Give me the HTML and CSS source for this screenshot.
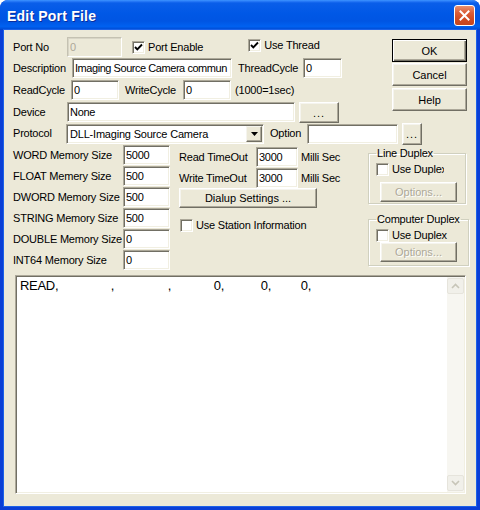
FILE: index.html
```html
<!DOCTYPE html>
<html lang="en">
<head>
    <meta charset="UTF-8">
    <title>Edit Port File</title>
    <link rel="stylesheet" href="styles.css">
</head>
<body>
    <div class="window">
        <div class="titlebar">
            <span class="title">Edit Port File</span>
            <button class="close" type="button">
                <svg width="11" height="11" viewBox="0 0 11 11"><path d="M1.5 1.5 L9.5 9.5 M9.5 1.5 L1.5 9.5" stroke="#fff" stroke-width="2" stroke-linecap="square"/></svg>
            </button>
        </div>

        <div class="client">
            <div class="top">
                <div class="row">
                    <span class="lbl w-port">Port No</span>
                    <input class="edit disabled w55" type="text" value="0" disabled>
                    <label class="check gap11"><span class="chk on"><svg width="9" height="9" viewBox="0 0 9 9"><path d="M1 4 L3.3 6.3 L8 1.5" stroke="#000" stroke-width="1.9" fill="none"/></svg></span>Port Enable</label>
                    <label class="check gap-thread"><span class="chk on"><svg width="9" height="9" viewBox="0 0 9 9"><path d="M1 4 L3.3 6.3 L8 1.5" stroke="#000" stroke-width="1.9" fill="none"/></svg></span>Use Thread</label>
                </div>
                <div class="cmd">
                    <button class="btn default" type="button">OK</button>
                    <button class="btn" type="button">Cancel</button>
                    <button class="btn help" type="button">Help</button>
                </div>
                <div class="row">
                    <span class="lbl w-desc">Description</span>
                    <input class="edit w160" type="text" value="Imaging Source Camera commun">
                    <span class="lbl w-thread">ThreadCycle</span>
                    <input class="edit w39" type="text" value="0">
                </div>
                <div class="row">
                    <span class="lbl w-cycle">ReadCycle</span>
                    <input class="edit w48" type="text" value="0">
                    <span class="lbl w-cycle gap6">WriteCycle</span>
                    <input class="edit w48" type="text" value="0">
                    <span class="lbl gap4">(1000=1sec)</span>
                </div>
                <div class="row">
                    <span class="lbl w-port">Device</span>
                    <input class="edit w228" type="text" value="None">
                    <button class="btn dots w40" type="button">...</button>
                </div>
                <div class="row span">
                    <span class="lbl w-proto">Protocol</span>
                    <div class="combo">
                        <span class="combo-text">DLL-Imaging Source Camera</span>
                        <span class="combo-btn"><svg width="7" height="4" viewBox="0 0 7 4"><path d="M0 0 H7 L3.5 4 Z" fill="#000"/></svg></span>
                    </div>
                    <span class="lbl w-option">Option</span>
                    <input class="edit w91" type="text" value="">
                    <button class="btn dots w20" type="button">...</button>
                </div>
            </div>

            <div class="mid">
                <div class="mem">
                    <div class="mem-row"><span class="lbl w-mem">WORD Memory Size</span><input class="edit w47" type="text" value="5000"></div>
                    <div class="mem-row"><span class="lbl w-mem">FLOAT Memery Size</span><input class="edit w47" type="text" value="500"></div>
                    <div class="mem-row"><span class="lbl w-mem">DWORD Memory Size</span><input class="edit w47" type="text" value="500"></div>
                    <div class="mem-row"><span class="lbl w-mem">STRING Memory Size</span><input class="edit w47" type="text" value="500"></div>
                    <div class="mem-row"><span class="lbl w-mem">DOUBLE Memory Size</span><input class="edit w47" type="text" value="0"></div>
                    <div class="mem-row"><span class="lbl w-mem">INT64 Memory Size</span><input class="edit w47" type="text" value="0"></div>
                </div>

                <div class="timeouts">
                    <div class="mem-row"><span class="lbl w-time">Read TimeOut</span><input class="edit w42" type="text" value="3000"><span class="lbl gap3">Milli Sec</span></div>
                    <div class="mem-row"><span class="lbl w-time">Write TimeOut</span><input class="edit w42" type="text" value="3000"><span class="lbl gap3">Milli Sec</span></div>
                    <button class="btn dialup" type="button">Dialup Settings ...</button>
                    <label class="check station"><span class="chk"></span>Use Station Information</label>
                </div>

                <div class="duplex">
                    <fieldset class="group">
                        <legend>Line Duplex</legend>
                        <label class="check"><span class="chk"></span><span class="clip">Use Duplex</span></label>
                        <button class="btn off options" type="button" disabled>Options...</button>
                    </fieldset>
                    <fieldset class="group second">
                        <legend>Computer Duplex</legend>
                        <label class="check"><span class="chk"></span>Use Duplex</label>
                        <button class="btn off options tight" type="button" disabled>Options...</button>
                    </fieldset>
                </div>
            </div>

            <div class="log">
                <div class="log-text"><span class="cell c1">READ,</span><span class="cell c2">,</span><span class="cell c3">,</span><span class="cell c4">0,</span><span class="cell c5">0,</span><span class="cell c6">0,</span></div>
                <div class="vscroll">
                    <span class="arrow"><svg width="9" height="6" viewBox="0 0 9 6"><path d="M1 5 L4.5 1.5 L8 5" stroke="#c7c5b8" stroke-width="1.6" fill="none"/></svg></span>
                    <span class="track"></span>
                    <span class="arrow"><svg width="9" height="6" viewBox="0 0 9 6"><path d="M1 1 L4.5 4.5 L8 1" stroke="#c7c5b8" stroke-width="1.6" fill="none"/></svg></span>
                </div>
            </div>
        </div>
    </div>
</body>
</html>
```

FILE: styles.css
```css
body {
    margin: 0;
    background-color: #fff;
    font-family: "Liberation Sans", Arial, sans-serif;
    font-size: 11px;
    color: #000;
}
.window {
    width: 480px;
    height: 510px;
    display: flex;
    flex-direction: column;
    background-color: #0b3fd6;
    border-radius: 8px 8px 0 0;
    overflow: hidden;
}
.titlebar {
    height: 30px;
    flex: none;
    display: flex;
    align-items: center;
    justify-content: space-between;
    padding: 0 5px 0 7px;
    background: linear-gradient(to bottom, #3d95ff 0%, #2a7cf8 4%, #0a5ee9 10%, #0058e6 45%, #0055e3 70%, #0061f0 88%, #0052dd 95%, #0040c8 100%);
}
.title {
    color: #fff;
    font-weight: bold;
    font-size: 14px;
    letter-spacing: 0.2px;
    text-shadow: 1px 1px 0 #0a2d9c;
    margin-top: 1px;
}
.close {
    width: 21px;
    height: 21px;
    padding: 0;
    margin-top: 1px;
    border: 1px solid #fff;
    border-radius: 3px;
    background: linear-gradient(to bottom, #e8906f 0%, #dc5e38 35%, #cf4a22 70%, #c5461f 100%);
    display: flex;
    align-items: center;
    justify-content: center;
}
.client {
    flex: 1;
    margin: 0 4px 4px;
    padding: 7px 9px 0;
    background-color: #ece9d8;
    box-shadow: 0 0 0 1px #1c62e8;
}

/* common controls */
.lbl {
    flex: none;
    line-height: 20px;
    white-space: nowrap;
    letter-spacing: -0.2px;
}
.edit {
    box-sizing: border-box;
    height: 20px;
    margin: 0;
    padding: 0 2px;
    font-family: "Liberation Sans", Arial, sans-serif;
    font-size: 11px;
    letter-spacing: -0.3px;
    color: #000;
    background-color: #fff;
    border: 1px solid;
    border-color: #aca899 #fff #fff #aca899;
    box-shadow: inset 1px 1px 0 #716f64, inset -1px -1px 0 #f1efe2;
    outline: none;
}
.edit.disabled {
    background-color: #ece9d8;
    color: #aca899;
    border-color: #c5c2b2 #fff #fff #c5c2b2;
    box-shadow: inset 1px 1px 0 #d8d5c6;
}
.btn {
    box-sizing: border-box;
    height: 23px;
    margin: 0;
    padding: 0;
    font-family: "Liberation Sans", Arial, sans-serif;
    font-size: 11px;
    color: #000;
    background-color: #ece9d8;
    border: 1px solid;
    border-color: #fff #716f64 #716f64 #fff;
    box-shadow: inset -1px -1px 0 #aca899, inset 1px 1px 0 #f5f4ee;
}
.btn.default {
    border: 1px solid #000;
    box-shadow: inset 1px 1px 0 #fff, inset -1px -1px 0 #716f64, inset -2px -2px 0 #aca899;
}
.btn.off {
    color: #aca899;
    text-shadow: 1px 1px 0 #fff;
}
.check {
    display: flex;
    align-items: center;
    white-space: nowrap;
    line-height: 20px;
    letter-spacing: -0.2px;
}
.chk {
    box-sizing: border-box;
    width: 13px;
    height: 13px;
    flex: none;
    margin-right: 3px;
    display: flex;
    align-items: center;
    justify-content: center;
    background-color: #fff;
    border: 1px solid;
    border-color: #aca899 #fff #fff #aca899;
    box-shadow: inset 1px 1px 0 #716f64, inset -1px -1px 0 #f1efe2;
}

/* top block */
.top {
    display: grid;
    grid-template-columns: 379px 75px;
    grid-template-rows: 21px 22px 22px 21px 22px;
}
.row {
    display: flex;
    align-items: flex-start;
}
.row.span {
    grid-column: 1 / 3;
}
.cmd {
    grid-column: 2;
    grid-row: 1 / 5;
    display: flex;
    flex-direction: column;
    padding-top: 2px;
}
.cmd .btn {
    width: 75px;
    margin-bottom: 1px;
}
.cmd .help {
    margin-top: 1px;
}
.w-port { width: 54px; }
.w-desc { width: 59px; }
.w-thread { width: 65px; margin-left: 6px; }
.w-cycle { width: 58px; }
.w-proto { width: 53px; }
.w-option { width: 37px; margin-left: 6px; }
.w-mem { width: 110px; }
.w-time { width: 77px; }
.w20 { width: 20px; height: 22px; margin-left: 4px; }
.w39 { width: 39px; }
.w40 { width: 40px; height: 21px; margin-left: 4px; }
.w42 { width: 42px; }
.w47 { width: 47px; }
.w48 { width: 48px; }
.w55 { width: 55px; }
.w91 { width: 91px; margin-top: 1px; }
.w160 { width: 160px; padding: 0 1px 0 2px; letter-spacing: -0.45px; }
.w228 { width: 228px; }
.gap3 { margin-left: 3px; }
.gap4 { margin-left: 4px; }
.gap6 { margin-left: 6px; }
.gap11 { margin-left: 10px; margin-top: 0; }
.gap-thread { margin-left: 45px; margin-top: -2px; }
.dots {
    line-height: 14px;
    letter-spacing: 1px;
}
.combo {
    box-sizing: border-box;
    width: 198px;
    height: 20px;
    margin-top: 1px;
    display: flex;
    align-items: stretch;
    background-color: #fff;
    border: 1px solid;
    border-color: #aca899 #fff #fff #aca899;
    box-shadow: inset 1px 1px 0 #716f64, inset -1px -1px 0 #f1efe2;
    padding: 1px;
}
.combo-text {
    flex: 1;
    line-height: 17px;
    padding-left: 2px;
    letter-spacing: -0.2px;
}
.combo-btn {
    box-sizing: border-box;
    width: 16px;
    display: flex;
    align-items: center;
    justify-content: center;
    background-color: #ece9d8;
    border: 1px solid;
    border-color: #f5f4ee #716f64 #716f64 #f5f4ee;
    box-shadow: inset -1px -1px 0 #aca899;
}

/* middle block */
.mid {
    height: 130px;
    display: flex;
}
.mem {
    width: 166px;
    display: grid;
    grid-template-rows: repeat(6, 21px);
    align-content: start;
}
.mem-row {
    display: flex;
    align-items: flex-start;
    height: 21px;
}
.timeouts {
    width: 189px;
    padding-top: 2px;
    display: flex;
    flex-direction: column;
    align-items: flex-start;
}
.dialup {
    width: 138px;
    height: 20px;
    margin-top: -1px;
}
.station {
    margin-top: 7px;
    margin-left: 1px;
}
.duplex {
    width: 98px;
}
.group {
    box-sizing: border-box;
    width: 98px;
    margin: 2px 0 0;
    padding: 3px 7px 1px;
    border: 1px solid #d0d0bf;
    box-shadow: 1px 1px 0 #fff, inset 1px 1px 0 #fff;
    display: flex;
    flex-direction: column;
    align-items: flex-start;
}
.group legend {
    padding: 0 1px;
    margin-left: 0;
    line-height: 13px;
    letter-spacing: -0.2px;
    white-space: nowrap;
}
.group .check {
    line-height: 13px;
}
.group.second {
    margin-top: 9px;
    padding-bottom: 3px;
}
.clip {
    width: 52px;
    overflow: hidden;
}
.options {
    width: 77px;
    height: 20px;
    margin-top: 6px;
    margin-left: 4px;
}
.options.tight {
    margin-top: 0;
}

/* message log */
.log {
    box-sizing: border-box;
    width: 451px;
    height: 219px;
    margin-left: 2px;
    display: flex;
    background-color: #fff;
    border: 1px solid;
    border-color: #aca899 #fff #fff #aca899;
    box-shadow: inset 1px 1px 0 #716f64, inset -1px -1px 0 #f1efe2;
    padding: 1px;
}
.log-text {
    flex: 1;
    padding: 1px 3px;
    font-size: 13px;
    line-height: 15px;
    letter-spacing: -0.3px;
    white-space: pre;
}
.cell {
    display: inline-block;
    text-align: right;
}
.c1 { width: 38px; text-align: left; }
.c2 { width: 56px; }
.c3 { width: 57px; }
.c4 { width: 53px; }
.c5 { width: 47px; }
.c6 { width: 40px; }
.vscroll {
    width: 17px;
    display: flex;
    flex-direction: column;
    background-color: #f7f6f1;
}
.arrow {
    box-sizing: border-box;
    height: 16px;
    margin: 1px 0;
    display: flex;
    align-items: center;
    justify-content: center;
    background-color: #f1f0ea;
    border: 1px solid #e6e4dc;
    border-radius: 2px;
}
.track {
    flex: 1;
}
```
